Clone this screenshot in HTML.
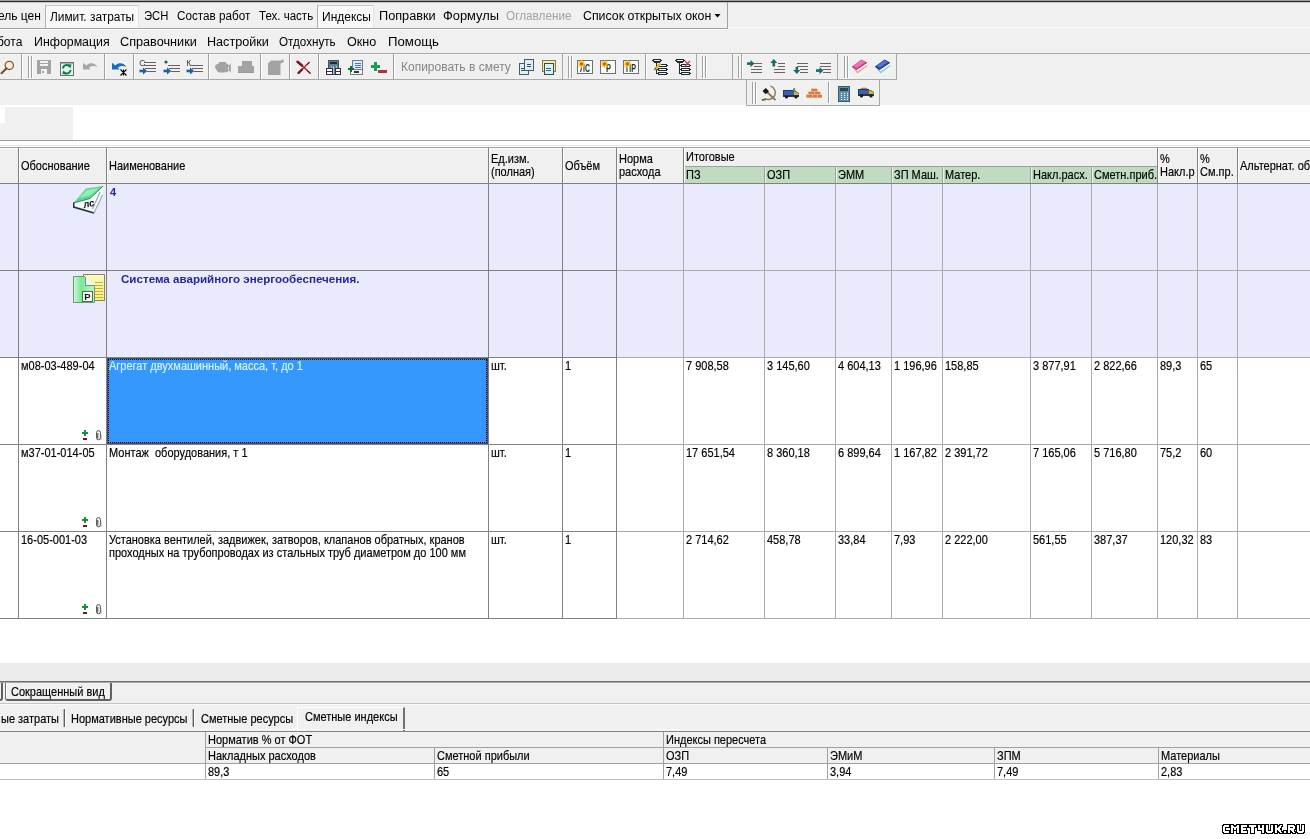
<!DOCTYPE html>
<html><head><meta charset="utf-8">
<style>
*{margin:0;padding:0;box-sizing:border-box}
html,body{width:1310px;height:839px;overflow:hidden;background:#fff;font-family:"Liberation Sans",sans-serif;position:relative}
.a{position:absolute}
#root{position:absolute;left:0;top:0;width:1310px;height:839px;will-change:transform}
.t{position:absolute;white-space:nowrap;font-size:12px;line-height:14px;color:#000}
.g{position:absolute;white-space:nowrap;font-size:11px;line-height:13px;color:#000;-webkit-text-stroke:0.15px currentColor;transform:scaleY(1.12);transform-origin:0 0}
.b{position:absolute;white-space:nowrap;font-size:11px;line-height:13px;color:#2626a0;font-weight:bold}
svg{shape-rendering:crispEdges}
svg .s{shape-rendering:geometricPrecision}
</style></head><body><div id="root">
<div class="a" style="left:0px;top:0px;width:1310px;height:106px;background:#f0f0f0;"></div>
<div class="a" style="left:0px;top:0px;width:1310px;height:1px;background:#a0a0a0"></div>
<div class="a" style="left:0px;top:1px;width:1310px;height:1px;background:#2a2a2a"></div>
<div class="a" style="left:0px;top:2px;width:1310px;height:1px;background:#c8c8c8"></div>
<div class="a" style="left:0px;top:28px;width:728px;height:1px;background:#a0a0a0"></div>
<div class="a" style="left:0px;top:29px;width:728px;height:1px;background:#fcfcfc"></div>
<div class="a" style="left:727px;top:2px;width:1px;height:27px;background:#a0a0a0"></div>
<div class="a" style="left:728px;top:27px;width:582px;height:1px;background:#fafafa"></div>
<div class="a" style="left:45px;top:5px;width:94px;height:23px;background:#f9f9f9;border-left:1px solid #b0b0b0;border-top:1px solid #c8c8c8;border-right:1px solid #e2e2e2"></div>
<div class="a" style="left:317px;top:5px;width:57px;height:23px;background:#f9f9f9;border-left:1px solid #b0b0b0;border-top:1px solid #c8c8c8;border-right:1px solid #e2e2e2"></div>
<div class="t" style="left:-2px;top:9px;transform:scaleX(1);transform-origin:0 0">ель цен</div>
<div class="t" style="left:50px;top:10px;transform:scaleX(0.99);transform-origin:0 0">Лимит. затраты</div>
<div class="t" style="left:144px;top:9px;transform:scaleX(0.94);transform-origin:0 0">ЭСН</div>
<div class="t" style="left:177px;top:9px;transform:scaleX(0.975);transform-origin:0 0">Состав работ</div>
<div class="t" style="left:259px;top:9px;transform:scaleX(0.96);transform-origin:0 0">Тех. часть</div>
<div class="t" style="left:322px;top:10px;transform:scaleX(1.0);transform-origin:0 0">Индексы</div>
<div class="t" style="left:379px;top:9px;transform:scaleX(1.06);transform-origin:0 0">Поправки</div>
<div class="t" style="left:443px;top:9px;transform:scaleX(1.07);transform-origin:0 0">Формулы</div>
<div class="t" style="left:506px;top:9px;color:#a3a3a3;transform:scaleX(0.98);transform-origin:0 0">Оглавление</div>
<div class="t" style="left:583px;top:9px;transform:scaleX(1.03);transform-origin:0 0">Список открытых окон</div>
<svg class="a" style="left:714px;top:14px" width="7" height="4" viewBox="0 0 7 4"><path class="s" d="M0.5 0H6.5L3.5 3.5Z" fill="#000"/></svg>
<div class="t" style="left:-3px;top:35px;transform:scaleX(1);transform-origin:0 0">бота</div>
<div class="t" style="left:34px;top:35px;transform:scaleX(1.03);transform-origin:0 0">Информация</div>
<div class="t" style="left:120px;top:35px;transform:scaleX(1.056);transform-origin:0 0">Справочники</div>
<div class="t" style="left:207px;top:35px;transform:scaleX(1.05);transform-origin:0 0">Настройки</div>
<div class="t" style="left:279px;top:35px;transform:scaleX(0.97);transform-origin:0 0">Отдохнуть</div>
<div class="t" style="left:347px;top:35px;transform:scaleX(1.05);transform-origin:0 0">Окно</div>
<div class="t" style="left:388px;top:35px;transform:scaleX(1.1);transform-origin:0 0">Помощь</div>
<div class="a" style="left:0px;top:53px;width:1310px;height:1px;background:#a8a8a8"></div>
<div class="a" style="left:0px;top:79px;width:897px;height:1px;background:#a8a8a8"></div>
<div class="a" style="left:0px;top:54px;width:897px;height:1px;background:#f8f8f8"></div>
<div class="a" style="left:21px;top:54px;width:1px;height:25px;background:#a0a0a0"></div>
<div class="a" style="left:22px;top:54px;width:1px;height:25px;background:#ffffff"></div>
<div class="a" style="left:28px;top:56px;width:1px;height:22px;background:#a0a0a0"></div>
<div class="a" style="left:29px;top:56px;width:1px;height:22px;background:#fff"></div>
<div class="a" style="left:31px;top:56px;width:1px;height:22px;background:#a0a0a0"></div>
<div class="a" style="left:32px;top:56px;width:1px;height:22px;background:#fff"></div>
<div class="a" style="left:104px;top:54px;width:1px;height:25px;background:#a0a0a0"></div>
<div class="a" style="left:105px;top:54px;width:1px;height:25px;background:#ffffff"></div>
<div class="a" style="left:133px;top:54px;width:1px;height:25px;background:#a0a0a0"></div>
<div class="a" style="left:134px;top:54px;width:1px;height:25px;background:#ffffff"></div>
<div class="a" style="left:208px;top:54px;width:1px;height:25px;background:#a0a0a0"></div>
<div class="a" style="left:209px;top:54px;width:1px;height:25px;background:#ffffff"></div>
<div class="a" style="left:260px;top:54px;width:1px;height:25px;background:#a0a0a0"></div>
<div class="a" style="left:261px;top:54px;width:1px;height:25px;background:#ffffff"></div>
<div class="a" style="left:289px;top:54px;width:1px;height:25px;background:#a0a0a0"></div>
<div class="a" style="left:290px;top:54px;width:1px;height:25px;background:#ffffff"></div>
<div class="a" style="left:318px;top:54px;width:1px;height:25px;background:#a0a0a0"></div>
<div class="a" style="left:319px;top:54px;width:1px;height:25px;background:#ffffff"></div>
<div class="a" style="left:393px;top:54px;width:1px;height:25px;background:#a0a0a0"></div>
<div class="a" style="left:394px;top:54px;width:1px;height:25px;background:#ffffff"></div>
<div class="a" style="left:562px;top:53px;width:1px;height:27px;background:#a8a8a8"></div>
<div class="a" style="left:568px;top:56px;width:1px;height:22px;background:#a0a0a0"></div>
<div class="a" style="left:569px;top:56px;width:1px;height:22px;background:#fff"></div>
<div class="a" style="left:571px;top:56px;width:1px;height:22px;background:#a0a0a0"></div>
<div class="a" style="left:572px;top:56px;width:1px;height:22px;background:#fff"></div>
<div class="a" style="left:645px;top:54px;width:1px;height:25px;background:#a0a0a0"></div>
<div class="a" style="left:646px;top:54px;width:1px;height:25px;background:#ffffff"></div>
<div class="a" style="left:696px;top:53px;width:1px;height:27px;background:#a8a8a8"></div>
<div class="a" style="left:702px;top:56px;width:1px;height:22px;background:#a0a0a0"></div>
<div class="a" style="left:703px;top:56px;width:1px;height:22px;background:#fff"></div>
<div class="a" style="left:705px;top:56px;width:1px;height:22px;background:#a0a0a0"></div>
<div class="a" style="left:706px;top:56px;width:1px;height:22px;background:#fff"></div>
<div class="a" style="left:732px;top:53px;width:1px;height:27px;background:#a8a8a8"></div>
<div class="a" style="left:738px;top:56px;width:1px;height:22px;background:#a0a0a0"></div>
<div class="a" style="left:739px;top:56px;width:1px;height:22px;background:#fff"></div>
<div class="a" style="left:741px;top:56px;width:1px;height:22px;background:#a0a0a0"></div>
<div class="a" style="left:742px;top:56px;width:1px;height:22px;background:#fff"></div>
<div class="a" style="left:741px;top:53px;width:1px;height:27px;background:#a8a8a8"></div>
<div class="a" style="left:837px;top:53px;width:1px;height:27px;background:#a8a8a8"></div>
<div class="a" style="left:844px;top:56px;width:1px;height:22px;background:#a0a0a0"></div>
<div class="a" style="left:845px;top:56px;width:1px;height:22px;background:#fff"></div>
<div class="a" style="left:847px;top:56px;width:1px;height:22px;background:#a0a0a0"></div>
<div class="a" style="left:848px;top:56px;width:1px;height:22px;background:#fff"></div>
<div class="a" style="left:896px;top:53px;width:1px;height:27px;background:#a8a8a8"></div>
<svg class="a" style="left:0px;top:57px" width="16" height="18" viewBox="0 0 16 18"><circle class="s" cx="9.3" cy="8.4" r="7" fill="#fdf0e2" opacity="0.6"/><circle class="s" cx="9.3" cy="8.4" r="4.1" fill="#fdeee0" stroke="#7a5a38" stroke-width="1.3"/><path class="s" d="M6.6 11.2L1.5 16.3" stroke="#6e5030" stroke-width="2" stroke-linecap="round"/></svg>
<svg class="a" style="left:37px;top:60px" width="15" height="14" viewBox="0 0 15 14"><path d="M0 0H14V14H0Z" fill="#a3a3a3"/><rect x="3" y="1" width="8" height="2" fill="#f2f2f2"/><rect x="3" y="4" width="8" height="2" fill="#f2f2f2"/><rect x="4" y="9" width="6" height="5" fill="#f2f2f2"/><rect x="5" y="11" width="2" height="2" fill="#a3a3a3"/></svg>
<svg class="a" style="left:60px;top:60px" width="15" height="16" viewBox="0 0 15 16"><rect x="0.5" y="2.5" width="13" height="13" fill="#dcf6ee" stroke="#707070"/><path d="M1 3H13" stroke="#b0b0b0"/><path class="s" d="M3 8.5A3.7 3.7 0 0 1 9.5 6.3M10.5 10A3.7 3.7 0 0 1 4 12.2" fill="none" stroke="#137a4a" stroke-width="1.9"/><path class="s" d="M7.6 4.2L11.6 4.6L10.3 8.4Z M6.2 14.4L2.2 14L3.5 10.2Z" fill="#137a4a"/></svg>
<svg class="a" style="left:83px;top:61px" width="16" height="16" viewBox="0 0 16 16"><path class="s" d="M0 1.7L0 8.6L7.7 8.6L5.9 6.7C8.2 4.6 11.6 4.3 14.4 6.2C12.4 2.2 7.2 0.8 3.3 4.4Z" fill="#a6a6a6" /></svg>
<svg class="a" style="left:112px;top:61px" width="16" height="16" viewBox="0 0 16 16"><path class="s" d="M0 1.7L0 8.6L7.7 8.6L5.9 6.7C8.2 4.6 11.6 4.3 14.4 6.2C12.4 2.2 7.2 0.8 3.3 4.4Z" fill="#1a6cc6" /><path class="s" d="M8.5 8.5L14.5 14.5M14.5 8.5L8.5 14.5M11.5 8.5V14.5" stroke="#000" stroke-width="1.1"/></svg>
<svg class="a" style="left:139px;top:57px" width="17" height="18" viewBox="0 0 17 18"><text x="0.2" y="9.2" font-size="8.5" font-family="Liberation Sans" fill="#3a3a3a">C</text><rect x="5" y="5" width="12" height="1" fill="#6a5e5e"/><rect x="5" y="8" width="12" height="1" fill="#6a5e5e"/><rect x="6" y="11" width="11" height="1" fill="#6a5e5e"/><rect x="8" y="14" width="9" height="1" fill="#6a5e5e"/><path class="s" d="M0.5 14H5.5" stroke="#1d5f9f" stroke-width="2.6"/><path class="s" d="M4 10.5L8.2 14L4 17.5Z" fill="#1d5f9f"/></svg>
<svg class="a" style="left:163px;top:57px" width="17" height="18" viewBox="0 0 17 18"><circle class="s" cx="3" cy="5" r="1.6" fill="#16662e"/><rect x="5" y="8" width="12" height="1" fill="#6a5e5e"/><rect x="6" y="11" width="11" height="1" fill="#6a5e5e"/><rect x="8" y="14" width="9" height="1" fill="#6a5e5e"/><path class="s" d="M0.5 14H5.5" stroke="#1d5f9f" stroke-width="2.6"/><path class="s" d="M4 10.5L8.2 14L4 17.5Z" fill="#1d5f9f"/></svg>
<svg class="a" style="left:186px;top:57px" width="17" height="18" viewBox="0 0 17 18"><text x="0.2" y="9.2" font-size="8.5" font-family="Liberation Sans" fill="#3a3a3a">К</text><rect x="5" y="8" width="12" height="1" fill="#6a5e5e"/><rect x="6" y="11" width="11" height="1" fill="#6a5e5e"/><rect x="8" y="14" width="9" height="1" fill="#6a5e5e"/><path class="s" d="M0.5 14H5.5" stroke="#1d5f9f" stroke-width="2.6"/><path class="s" d="M4 10.5L8.2 14L4 17.5Z" fill="#1d5f9f"/></svg>
<svg class="a" style="left:215px;top:57px" width="16" height="16" viewBox="0 0 16 16"><path class="s" d="M0 9C1 7.5 2.5 6.5 4 6.5V5H11V6.5C12.5 6.5 13.5 7.5 13.8 8.5L15.8 6.5V15.5L13.8 13.5C13 14.5 12 15.5 9 15.5H4C2 15 1 12 0 10Z" fill="#a3a3a3" /><path d="M13.3 9.5V13" stroke="#f0f0f0" stroke-width="0.8"/></svg>
<svg class="a" style="left:238px;top:60px" width="16" height="14" viewBox="0 0 16 14"><path d="M4 1H14V6H15.5V13H0V6H4Z" fill="#a3a3a3"/><path d="M0 13H16V12H0Z" fill="#9a9a9a"/></svg>
<svg class="a" style="left:268px;top:59px" width="16" height="16" viewBox="0 0 16 16"><path class="s" d="M0 4.5L3 1.5H13L15 0L16 3L12.5 4.5V16H0Z" fill="#a3a3a3" /></svg>
<svg class="a" style="left:296px;top:60px" width="16" height="16" viewBox="0 0 16 16"><path class="s" d="M2 2L14.5 13.5" stroke="#c8202c" stroke-width="1.6"/><path class="s" d="M13.5 2L2.5 13" stroke="#c8202c" stroke-width="1.4"/><path class="s" d="M1.5 1.8L6 5.5" stroke="#7a1420" stroke-width="2.4" stroke-linecap="round"/><path class="s" d="M2.5 13L6 9.5" stroke="#7a1420" stroke-width="2.4" stroke-linecap="round"/><path class="s" d="M11 10.5L14.5 13.5M11 5L13.5 2" stroke="#4a1a20" stroke-width="1"/></svg>
<svg class="a" style="left:326px;top:60px" width="15" height="15" viewBox="0 0 15 15"><rect x="2.5" y="0.5" width="10" height="14" fill="#5f7f94" stroke="#3f5564"/><rect x="4" y="2" width="7" height="2" fill="#1e2e38"/><path d="M5 5.5V14M7.5 5.5V14M10 5.5V14" stroke="#a8cce0" stroke-width="1"/><path d="M0.5 8.5H6V11.5H0.5Z M0.5 11.5H6V14.5H0.5Z M9 8.5H14.5V11.5H9Z M9 11.5H14.5V14.5H9Z" fill="#fafafa" stroke="#333"/></svg>
<svg class="a" style="left:348px;top:60px" width="15" height="15" viewBox="0 0 15 15"><rect x="4.5" y="0.5" width="10" height="9" fill="#dcecfa" stroke="#6c7c88"/><path d="M7 3H13M7 5H13M7 7H13" stroke="#4b7aa8" stroke-width="1"/><rect x="2.5" y="9.5" width="12" height="5" fill="#f4f4f4" stroke="#7a7a7a"/><rect x="6" y="11" width="5" height="2" fill="#333"/><path d="M3 6V12M0 9H6" stroke="#0e6e36" stroke-width="2.2"/></svg>
<svg class="a" style="left:371px;top:61px" width="16" height="12" viewBox="0 0 16 12"><path d="M4.5 1V10M0 5.5H9" stroke="#14a050" stroke-width="3"/><rect x="7" y="8.5" width="9" height="3" fill="#b8303a"/></svg>
<div class="t" style="left:401px;top:60px;color:#858585">Копировать в смету</div>
<svg class="a" style="left:519px;top:59px" width="15" height="16" viewBox="0 0 15 16"><rect x="5.5" y="0.5" width="9" height="11" fill="#d8eefa" stroke="#4a5a62" stroke-width="1.2"/><path d="M7.5 5H12M7.5 7H12" stroke="#3a4a58"/><rect x="0.5" y="4.5" width="9" height="11" fill="#d8f4f8" stroke="#4a5a62" stroke-width="1.2"/><path d="M2 9H5M2 11H5" stroke="#3a4a58"/><rect x="5.5" y="0.5" width="9" height="11" fill="#dcecfa" stroke="#4a5a62" stroke-width="1.2"/><path d="M7.5 5H12M7.5 7H12" stroke="#3a4a58"/></svg>
<svg class="a" style="left:542px;top:59px" width="14" height="16" viewBox="0 0 14 16"><rect x="0.5" y="1.5" width="13" height="11" rx="1.5" fill="#f6eab0" stroke="#8a7a40" stroke-width="1.2"/><rect x="2.5" y="4.5" width="9" height="11" fill="#d8f2f8" stroke="#3a4a50" stroke-width="1.2"/><path d="M4 9H9M4 11H9" stroke="#2f5f8f"/></svg>
<svg class="a" style="left:577px;top:60px" width="16" height="14" viewBox="0 0 16 14"><rect x="0.5" y="0.5" width="15" height="13" fill="#f8fafc" stroke="#6f6f6f"/><text x="3" y="12" font-size="10" font-weight="bold" font-family="Liberation Sans" fill="#1e2a34" textLength="10" lengthAdjust="spacingAndGlyphs">ЛС</text><path class="s" d="M4.5 -0.5L5.4 1.8L7.8 0.8L6.8 3.1L9 4L6.8 4.9L7.8 7.2L5.4 6.2L4.5 8.5L3.6 6.2L1.2 7.2L2.2 4.9L0 4L2.2 3.1L1.2 0.8L3.6 1.8Z" fill="#f8c020"/><circle class="s" cx="4.5" cy="4" r="1.4" fill="#b85a10"/></svg>
<svg class="a" style="left:600px;top:60px" width="16" height="14" viewBox="0 0 16 14"><rect x="0.5" y="0.5" width="15" height="13" fill="#f8fafc" stroke="#6f6f6f"/><text x="6" y="12" font-size="10" font-weight="bold" font-family="Liberation Sans" fill="#1e2a34" textLength="5" lengthAdjust="spacingAndGlyphs">Р</text><path class="s" d="M4.5 -0.5L5.4 1.8L7.8 0.8L6.8 3.1L9 4L6.8 4.9L7.8 7.2L5.4 6.2L4.5 8.5L3.6 6.2L1.2 7.2L2.2 4.9L0 4L2.2 3.1L1.2 0.8L3.6 1.8Z" fill="#f8c020"/><circle class="s" cx="4.5" cy="4" r="1.4" fill="#b85a10"/></svg>
<svg class="a" style="left:623px;top:60px" width="16" height="14" viewBox="0 0 16 14"><rect x="0.5" y="0.5" width="15" height="13" fill="#f8fafc" stroke="#6f6f6f"/><text x="3" y="12" font-size="10" font-weight="bold" font-family="Liberation Sans" fill="#1e2a34" textLength="10" lengthAdjust="spacingAndGlyphs">ПР</text><path class="s" d="M4.5 -0.5L5.4 1.8L7.8 0.8L6.8 3.1L9 4L6.8 4.9L7.8 7.2L5.4 6.2L4.5 8.5L3.6 6.2L1.2 7.2L2.2 4.9L0 4L2.2 3.1L1.2 0.8L3.6 1.8Z" fill="#f8c020"/><circle class="s" cx="4.5" cy="4" r="1.4" fill="#b85a10"/></svg>
<svg class="a" style="left:652px;top:59px" width="16" height="17" viewBox="0 0 16 17"><rect x="1" y="0.5" width="8" height="2.5" rx="1" fill="none" stroke="#1e2a30" stroke-width="1.3"/><path d="M4.5 3V14.5H6M4.5 6.5H6M4.5 10.5H6" fill="none" stroke="#1e2a30" stroke-width="1.2"/><rect x="6.5" y="5.5" width="8.5" height="2.3" rx="1" fill="#f8f8f8" stroke="#1e2a30" stroke-width="1.3"/><rect x="6.5" y="9.5" width="8.5" height="2.3" rx="1" fill="#f8f8f8" stroke="#1e2a30" stroke-width="1.3"/><rect x="6.5" y="13.5" width="8.5" height="2.3" rx="1" fill="#f8f8f8" stroke="#1e2a30" stroke-width="1.3"/><path class="s" d="M2.5 11L8.5 4.5" stroke="#e8b828" stroke-width="2.4"/><path class="s" d="M2.5 11L4 8.5" stroke="#604010" stroke-width="1"/></svg>
<svg class="a" style="left:675px;top:59px" width="16" height="17" viewBox="0 0 16 17"><rect x="1" y="0.5" width="8" height="2.5" rx="1" fill="none" stroke="#1e2a30" stroke-width="1.3"/><path d="M4.5 3V14.5H6M4.5 6.5H6M4.5 10.5H6" fill="none" stroke="#1e2a30" stroke-width="1.2"/><rect x="6.5" y="5.5" width="8.5" height="2.3" rx="1" fill="#f8f8f8" stroke="#1e2a30" stroke-width="1.3"/><rect x="6.5" y="9.5" width="8.5" height="2.3" rx="1" fill="#f8f8f8" stroke="#1e2a30" stroke-width="1.3"/><rect x="6.5" y="13.5" width="8.5" height="2.3" rx="1" fill="#f8f8f8" stroke="#1e2a30" stroke-width="1.3"/><path class="s" d="M10 2L15 7M15 2L10 7" stroke="#c83848" stroke-width="1.2"/></svg>
<svg class="a" style="left:747px;top:59px" width="16" height="16" viewBox="0 0 16 16"><rect x="7" y="4" width="8" height="1" fill="#6e6060"/><rect x="7" y="7" width="8" height="1" fill="#6e6060"/><rect x="4" y="10" width="11" height="1" fill="#6e6060"/><rect x="4" y="13" width="11" height="1" fill="#6e6060"/><path class="s" d="M0 4.6H4.5" stroke="#1d6868" stroke-width="2.6"/><path class="s" d="M3.5 1L7.5 4.6L3.5 8.2Z" fill="#1d6868"/></svg>
<svg class="a" style="left:770px;top:59px" width="16" height="16" viewBox="0 0 16 16"><rect x="8" y="4" width="7" height="1" fill="#6e6060"/><rect x="8" y="7" width="7" height="1" fill="#6e6060"/><rect x="4" y="10" width="11" height="1" fill="#6e6060"/><rect x="4" y="13" width="11" height="1" fill="#6e6060"/><path class="s" d="M3.8 7.5V3" stroke="#1d6868" stroke-width="2.6"/><path class="s" d="M0.2 4L3.8 0L7.4 4Z" fill="#1d6868"/></svg>
<svg class="a" style="left:793px;top:59px" width="16" height="16" viewBox="0 0 16 16"><rect x="4" y="4" width="11" height="1" fill="#6e6060"/><rect x="4" y="7" width="11" height="1" fill="#6e6060"/><rect x="7" y="10" width="8" height="1" fill="#6e6060"/><rect x="7" y="13" width="8" height="1" fill="#6e6060"/><path class="s" d="M3.8 8V11.5" stroke="#1d6868" stroke-width="2.6"/><path class="s" d="M0.2 11L3.8 15L7.4 11Z" fill="#1d6868"/></svg>
<svg class="a" style="left:816px;top:59px" width="16" height="16" viewBox="0 0 16 16"><rect x="4" y="4" width="11" height="1" fill="#6e6060"/><rect x="4" y="7" width="11" height="1" fill="#6e6060"/><rect x="7" y="10" width="8" height="1" fill="#6e6060"/><rect x="7" y="13" width="8" height="1" fill="#6e6060"/><path class="s" d="M0 11.6H4.5" stroke="#1d6868" stroke-width="2.6"/><path class="s" d="M3.5 8L7.5 11.6L3.5 15.2Z" fill="#1d6868"/></svg>
<svg class="a" style="left:852px;top:59px" width="16" height="16" viewBox="0 0 16 16"><path class="s" d="M0.5 8.5L5.5 14.5L15.5 7L14.5 4.5Z" fill="#e8a4a0" /><path class="s" d="M4 10L5.5 12.5L15.5 5.5L15 3.5Z" fill="#fff0f6" /><path class="s" d="M0 7.5L9.5 0.5L15 3.5L4.5 10.5Z" fill="#e64a98" /><path class="s" d="M2 7L9.5 1.5L12.5 3.2L5 8.5Z" fill="rgba(255,255,255,0.25)" /><path class="s" d="M0.2 7.5L4.5 10.5L15 3.5" fill="none" stroke="#a02a60" stroke-width="0.9"/></svg>
<svg class="a" style="left:875px;top:59px" width="16" height="16" viewBox="0 0 16 16"><path class="s" d="M0.5 8.5L5.5 14.5L15.5 7L14.5 4.5Z" fill="#8ccce0" /><path class="s" d="M4 10L5.5 12.5L15.5 5.5L15 3.5Z" fill="#f0faff" /><path class="s" d="M0 7.5L9.5 0.5L15 3.5L4.5 10.5Z" fill="#2448b8" /><path class="s" d="M2 7L9.5 1.5L12.5 3.2L5 8.5Z" fill="rgba(255,255,255,0.25)" /><path class="s" d="M0.2 7.5L4.5 10.5L15 3.5" fill="none" stroke="#142a80" stroke-width="0.9"/></svg>
<div class="a" style="left:0px;top:105px;width:1310px;height:36px;background:#ffffff;"></div>
<div class="a" style="left:0px;top:107px;width:73px;height:33px;background:#f0f0f0;"></div>
<div class="a" style="left:0px;top:105px;width:5px;height:18px;background:#ffffff;"></div>
<div class="a" style="left:746px;top:80px;width:134px;height:26px;border:1px solid #a8a8a8;border-top:none;background:#f0f0f0"></div>
<div class="a" style="left:752px;top:82px;width:1px;height:22px;background:#a0a0a0"></div>
<div class="a" style="left:753px;top:82px;width:1px;height:22px;background:#fff"></div>
<div class="a" style="left:755px;top:82px;width:1px;height:22px;background:#a0a0a0"></div>
<div class="a" style="left:756px;top:82px;width:1px;height:22px;background:#fff"></div>
<div class="a" style="left:828px;top:82px;width:1px;height:21px;background:#a0a0a0"></div>
<div class="a" style="left:829px;top:82px;width:1px;height:21px;background:#ffffff"></div>
<svg class="a" style="left:761px;top:85px" width="16" height="16" viewBox="0 0 16 16"><path class="s" d="M9.5 1.2A6.6 6.6 0 1 1 5.5 14.2" fill="none" stroke="#8a7458" stroke-width="1.4"/><path class="s" d="M5.5 14L0.8 15.2" stroke="#7a6448" stroke-width="2"/><path class="s" d="M5.5 6.5L14.5 15.2" stroke="#8a7050" stroke-width="1.8"/><path class="s" d="M1.5 6L4.8 3L8 6.2L4.6 9.2Z" fill="#161616"/></svg>
<svg class="a" style="left:783px;top:88px" width="16" height="11" viewBox="0 0 16 11"><rect x="0.5" y="2.5" width="10" height="4.5" fill="#2f64b0" stroke="#1a3a70"/><path class="s" d="M10.5 3.5H13L16 5.5V8.5H10.5Z" fill="#c8b070" stroke="#6a5a30" stroke-width="0.8"/><rect x="0" y="7" width="16" height="1.5" fill="#333"/><circle class="s" cx="3.5" cy="9" r="1.6" fill="#1a1a1a"/><circle class="s" cx="13" cy="9" r="1.6" fill="#1a1a1a"/><path class="s" d="M10 0.5L12 0L12.5 3H10Z" fill="#5a8a60" /></svg>
<svg class="a" style="left:806px;top:88px" width="16" height="10" viewBox="0 0 16 10"><path d="M5 0.5H11V3.5H5Z M2 3.5H8V6.5H2Z M8 3.5H14V6.5H8Z M0 6.5H6V9.5H0Z M6 6.5H11V9.5H6Z M11 6.5H16V9.5H11Z" fill="#d27a48" stroke="#f0b088" stroke-width="0.7"/></svg>
<svg class="a" style="left:838px;top:86px" width="12" height="16" viewBox="0 0 12 16"><rect x="0.5" y="0.5" width="11" height="15" rx="1" fill="#5e90a8" stroke="#3a5a6a"/><rect x="2" y="2" width="8" height="3" fill="#2a4450"/><path d="M2.5 7.5H3.5M5.5 7.5H6.5M8.5 7.5H9.5M2.5 9.5H3.5M5.5 9.5H6.5M8.5 9.5H9.5M2.5 11.5H3.5M5.5 11.5H6.5M8.5 11.5H9.5M2.5 13.5H3.5M5.5 13.5H6.5M8.5 13.5H9.5" stroke="#f0faff"/></svg>
<svg class="a" style="left:858px;top:87px" width="16" height="11" viewBox="0 0 16 11"><path class="s" d="M1 3.5L3 1L6 0.5L9 1L10.5 3.5Z" fill="#e07020" /><rect x="0.5" y="2.5" width="10" height="4.5" fill="#2f64b0" stroke="#1a3a70"/><path class="s" d="M10.5 3.5H13L16 5.5V8.5H10.5Z" fill="#c8b070" stroke="#6a5a30" stroke-width="0.8"/><rect x="0" y="7" width="16" height="1.5" fill="#333"/><circle class="s" cx="3.5" cy="9" r="1.6" fill="#1a1a1a"/><circle class="s" cx="13" cy="9" r="1.6" fill="#1a1a1a"/></svg>
<div class="a" style="left:0px;top:140px;width:1310px;height:1px;background:#a0a0a0"></div>
<div class="a" style="left:0px;top:145px;width:1310px;height:1px;background:#e6e6e6"></div>
<div class="a" style="left:0px;top:148px;width:1310px;height:35px;background:#f0f0f0;"></div>
<div class="a" style="left:0px;top:147px;width:1310px;height:1px;background:#a0a0a0"></div>
<div class="a" style="left:0px;top:148px;width:1310px;height:1px;background:#fafafa"></div>
<div class="a" style="left:684px;top:167px;width:473px;height:16px;background:#c0dcc0;"></div>
<div class="a" style="left:684px;top:166px;width:473px;height:1px;background:#a0a0a0"></div>
<div class="a" style="left:18px;top:148px;width:1px;height:35px;background:#808080"></div>
<div class="a" style="left:19px;top:148px;width:1px;height:35px;background:#ffffff"></div>
<div class="a" style="left:106px;top:148px;width:1px;height:35px;background:#808080"></div>
<div class="a" style="left:107px;top:148px;width:1px;height:35px;background:#ffffff"></div>
<div class="a" style="left:488px;top:148px;width:1px;height:35px;background:#808080"></div>
<div class="a" style="left:489px;top:148px;width:1px;height:35px;background:#ffffff"></div>
<div class="a" style="left:562px;top:148px;width:1px;height:35px;background:#808080"></div>
<div class="a" style="left:563px;top:148px;width:1px;height:35px;background:#ffffff"></div>
<div class="a" style="left:616px;top:148px;width:1px;height:35px;background:#808080"></div>
<div class="a" style="left:617px;top:148px;width:1px;height:35px;background:#ffffff"></div>
<div class="a" style="left:683px;top:148px;width:1px;height:35px;background:#808080"></div>
<div class="a" style="left:684px;top:148px;width:1px;height:35px;background:#ffffff"></div>
<div class="a" style="left:764px;top:167px;width:1px;height:16px;background:#a0a0a0"></div>
<div class="a" style="left:765px;top:167px;width:1px;height:16px;background:#e8f2e8"></div>
<div class="a" style="left:835px;top:167px;width:1px;height:16px;background:#a0a0a0"></div>
<div class="a" style="left:836px;top:167px;width:1px;height:16px;background:#e8f2e8"></div>
<div class="a" style="left:891px;top:167px;width:1px;height:16px;background:#a0a0a0"></div>
<div class="a" style="left:892px;top:167px;width:1px;height:16px;background:#e8f2e8"></div>
<div class="a" style="left:942px;top:167px;width:1px;height:16px;background:#a0a0a0"></div>
<div class="a" style="left:943px;top:167px;width:1px;height:16px;background:#e8f2e8"></div>
<div class="a" style="left:1030px;top:167px;width:1px;height:16px;background:#a0a0a0"></div>
<div class="a" style="left:1031px;top:167px;width:1px;height:16px;background:#e8f2e8"></div>
<div class="a" style="left:1091px;top:167px;width:1px;height:16px;background:#a0a0a0"></div>
<div class="a" style="left:1092px;top:167px;width:1px;height:16px;background:#e8f2e8"></div>
<div class="a" style="left:1157px;top:148px;width:1px;height:35px;background:#808080"></div>
<div class="a" style="left:1158px;top:148px;width:1px;height:35px;background:#ffffff"></div>
<div class="a" style="left:1197px;top:148px;width:1px;height:35px;background:#808080"></div>
<div class="a" style="left:1198px;top:148px;width:1px;height:35px;background:#ffffff"></div>
<div class="a" style="left:1237px;top:148px;width:1px;height:35px;background:#808080"></div>
<div class="a" style="left:1238px;top:148px;width:1px;height:35px;background:#ffffff"></div>
<div class="a" style="left:0px;top:183px;width:1310px;height:1px;background:#808080"></div>
<div class="g" style="left:21px;top:159px;">Обоснование</div>
<div class="g" style="left:109px;top:159px;">Наименование</div>
<div class="g" style="left:491px;top:152px;">Ед.изм.</div>
<div class="g" style="left:491px;top:165px;">(полная)</div>
<div class="g" style="left:565px;top:159px;">Объём</div>
<div class="g" style="left:619px;top:152px;">Норма</div>
<div class="g" style="left:619px;top:165px;">расхода</div>
<div class="g" style="left:686px;top:150px;">Итоговые</div>
<div class="g" style="left:686px;top:168px;">ПЗ</div>
<div class="g" style="left:767px;top:168px;">ОЗП</div>
<div class="g" style="left:838px;top:168px;">ЭММ</div>
<div class="g" style="left:894px;top:168px;">ЗП Маш.</div>
<div class="g" style="left:945px;top:168px;">Матер.</div>
<div class="g" style="left:1033px;top:168px;">Накл.расх.</div>
<div class="g" style="left:1094px;top:168px;">Сметн.приб.</div>
<div class="g" style="left:1160px;top:152px;">%</div>
<div class="g" style="left:1160px;top:165px;">Накл.р</div>
<div class="g" style="left:1200px;top:152px;">%</div>
<div class="g" style="left:1200px;top:165px;">См.пр.</div>
<div class="g" style="left:1240px;top:159px;">Альтернат. об</div>
<div class="a" style="left:0px;top:184px;width:1310px;height:86px;background:#eaeafd;"></div>
<div class="a" style="left:0px;top:271px;width:1310px;height:86px;background:#eaeafd;"></div>
<div class="a" style="left:0px;top:270px;width:617px;height:1px;background:#808080"></div>
<div class="a" style="left:617px;top:270px;width:693px;height:1px;background:#acacac"></div>
<div class="a" style="left:0px;top:357px;width:617px;height:1px;background:#808080"></div>
<div class="a" style="left:617px;top:357px;width:693px;height:1px;background:#acacac"></div>
<div class="a" style="left:0px;top:444px;width:617px;height:1px;background:#808080"></div>
<div class="a" style="left:617px;top:444px;width:693px;height:1px;background:#acacac"></div>
<div class="a" style="left:0px;top:531px;width:617px;height:1px;background:#808080"></div>
<div class="a" style="left:617px;top:531px;width:693px;height:1px;background:#acacac"></div>
<div class="a" style="left:0px;top:618px;width:617px;height:1px;background:#808080"></div>
<div class="a" style="left:617px;top:618px;width:693px;height:1px;background:#acacac"></div>
<div class="a" style="left:18px;top:184px;width:1px;height:434px;background:#808080"></div>
<div class="a" style="left:106px;top:184px;width:1px;height:434px;background:#808080"></div>
<div class="a" style="left:488px;top:184px;width:1px;height:434px;background:#808080"></div>
<div class="a" style="left:562px;top:184px;width:1px;height:434px;background:#808080"></div>
<div class="a" style="left:616px;top:184px;width:1px;height:434px;background:#808080"></div>
<div class="a" style="left:683px;top:184px;width:1px;height:434px;background:#acacac"></div>
<div class="a" style="left:764px;top:184px;width:1px;height:434px;background:#acacac"></div>
<div class="a" style="left:835px;top:184px;width:1px;height:434px;background:#acacac"></div>
<div class="a" style="left:891px;top:184px;width:1px;height:434px;background:#acacac"></div>
<div class="a" style="left:942px;top:184px;width:1px;height:434px;background:#acacac"></div>
<div class="a" style="left:1030px;top:184px;width:1px;height:434px;background:#acacac"></div>
<div class="a" style="left:1091px;top:184px;width:1px;height:434px;background:#acacac"></div>
<div class="a" style="left:1157px;top:184px;width:1px;height:434px;background:#acacac"></div>
<div class="a" style="left:1197px;top:184px;width:1px;height:434px;background:#acacac"></div>
<div class="a" style="left:1237px;top:184px;width:1px;height:434px;background:#acacac"></div>
<div class="a" style="left:107px;top:358px;width:381px;height:86px;background:#3598fe;border:1px solid #3a5070;outline:1px dotted #000;outline-offset:-2px"></div>
<svg class="a" style="left:73px;top:186px" width="31" height="28" viewBox="0 0 31 28"><path class="s" d="M0.5 17L13 2.5L30 0L17 12.5Z" fill="#62d690"/><path class="s" d="M6 12L14 4L26 2L18 9Z" fill="#8ef0b4"/><path class="s" d="M0.5 17L17 12.5L30 0V9L21 27L0.5 21Z" fill="#f6fafc"/><path class="s" d="M0.5 17L17 12.5L30 0" fill="none" stroke="#2f8a50" stroke-width="1"/><path class="s" d="M0.7 16.5V21L21 27" fill="none" stroke="#223038" stroke-width="1.6"/><path class="s" d="M29.5 9L21 27M27 6L19.5 23" stroke="#9aaabb" stroke-width="1.2"/><text x="10" y="21" font-size="10" font-family="Liberation Sans" font-style="italic" font-weight="bold" transform="rotate(-14 16 18)" fill="#111">лс</text></svg>
<div class="b" style="left:110px;top:186px;">4</div>
<svg class="a" style="left:73px;top:274px" width="32" height="30" viewBox="0 0 32 30"><defs><linearGradient id="gd" x1="0" x2="1" y1="0" y2="0"><stop offset="0" stop-color="#d8f6dc"/><stop offset="0.35" stop-color="#78e896"/><stop offset="1" stop-color="#c8f0cc"/></linearGradient><linearGradient id="yd" x1="0" x2="0" y1="0" y2="1"><stop offset="0" stop-color="#fdf8c0"/><stop offset="1" stop-color="#f6f070"/></linearGradient></defs><rect x="10.5" y="0.5" width="21" height="26" fill="url(#yd)" stroke="#8a8a50"/><path d="M22 8H30M22 11H30M22 14H30M22 17H30M22 20H30M22 23H30" stroke="#c0b040"/><path class="s" d="M0.5 2.5H11.5L21.5 12.5V28.5H0.5Z" fill="url(#gd)" stroke="#6a9a70"/><path d="M12.5 2.5V11.5H21.5" fill="#eefaf0" stroke="#6a9a70"/><rect x="9.5" y="17.5" width="10" height="10" fill="#fff" stroke="#3a7a40"/><text x="11.2" y="26" font-size="9.5" font-weight="bold" font-family="Liberation Sans" fill="#111">P</text></svg>
<div class="b" style="left:121px;top:272px;font-size:11.6px">Система аварийного энергообеспечения.</div>
<div class="g" style="left:21px;top:359px;">м08-03-489-04</div>
<div class="g" style="left:109px;top:359px;color:#d4f4ff">Агрегат двухмашинный, масса, т, до 1</div>
<div class="g" style="left:491px;top:359px;">шт.</div>
<div class="g" style="left:565px;top:359px;">1</div>
<div class="g" style="left:686px;top:359px;">7 908,58</div>
<div class="g" style="left:767px;top:359px;">3 145,60</div>
<div class="g" style="left:838px;top:359px;">4 604,13</div>
<div class="g" style="left:894px;top:359px;">1 196,96</div>
<div class="g" style="left:945px;top:359px;">158,85</div>
<div class="g" style="left:1033px;top:359px;">3 877,91</div>
<div class="g" style="left:1094px;top:359px;">2 822,66</div>
<div class="g" style="left:1160px;top:359px;">89,3</div>
<div class="g" style="left:1200px;top:359px;">65</div>
<svg class="a" style="left:82px;top:430px" width="6" height="10" viewBox="0 0 6 10"><path d="M3 0V6M0 3H6" stroke="#1f8a3a" stroke-width="2"/><rect x="1" y="8" width="4" height="2" fill="#701818"/></svg>
<svg class="a" style="left:96px;top:430px" width="6" height="11" viewBox="0 0 6 11"><rect class="s" x="0.6" y="0.6" width="3.8" height="9.2" rx="1.9" fill="#fff" stroke="#4a4a4a" stroke-width="1"/><path class="s" d="M1.8 3V8.5" stroke="#3a3a2a" stroke-width="1"/><path class="s" d="M4.9 4.5V9.5" stroke="#7a7a7a" stroke-width="0.9"/></svg>
<div class="g" style="left:21px;top:446px;">м37-01-014-05</div>
<div class="g" style="left:109px;top:446px;">Монтаж&nbsp; оборудования, т 1</div>
<div class="g" style="left:491px;top:446px;">шт.</div>
<div class="g" style="left:565px;top:446px;">1</div>
<div class="g" style="left:686px;top:446px;">17 651,54</div>
<div class="g" style="left:767px;top:446px;">8 360,18</div>
<div class="g" style="left:838px;top:446px;">6 899,64</div>
<div class="g" style="left:894px;top:446px;">1 167,82</div>
<div class="g" style="left:945px;top:446px;">2 391,72</div>
<div class="g" style="left:1033px;top:446px;">7 165,06</div>
<div class="g" style="left:1094px;top:446px;">5 716,80</div>
<div class="g" style="left:1160px;top:446px;">75,2</div>
<div class="g" style="left:1200px;top:446px;">60</div>
<svg class="a" style="left:82px;top:517px" width="6" height="10" viewBox="0 0 6 10"><path d="M3 0V6M0 3H6" stroke="#1f8a3a" stroke-width="2"/><rect x="1" y="8" width="4" height="2" fill="#701818"/></svg>
<svg class="a" style="left:96px;top:517px" width="6" height="11" viewBox="0 0 6 11"><rect class="s" x="0.6" y="0.6" width="3.8" height="9.2" rx="1.9" fill="#fff" stroke="#4a4a4a" stroke-width="1"/><path class="s" d="M1.8 3V8.5" stroke="#3a3a2a" stroke-width="1"/><path class="s" d="M4.9 4.5V9.5" stroke="#7a7a7a" stroke-width="0.9"/></svg>
<div class="g" style="left:21px;top:533px;">16-05-001-03</div>
<div class="g" style="left:109px;top:533px;">Установка вентилей, задвижек, затворов, клапанов обратных, кранов</div>
<div class="g" style="left:109px;top:546px;">проходных на трубопроводах из стальных труб диаметром до 100 мм</div>
<div class="g" style="left:491px;top:533px;">шт.</div>
<div class="g" style="left:565px;top:533px;">1</div>
<div class="g" style="left:686px;top:533px;">2 714,62</div>
<div class="g" style="left:767px;top:533px;">458,78</div>
<div class="g" style="left:838px;top:533px;">33,84</div>
<div class="g" style="left:894px;top:533px;">7,93</div>
<div class="g" style="left:945px;top:533px;">2 222,00</div>
<div class="g" style="left:1033px;top:533px;">561,55</div>
<div class="g" style="left:1094px;top:533px;">387,37</div>
<div class="g" style="left:1160px;top:533px;">120,32</div>
<div class="g" style="left:1200px;top:533px;">83</div>
<svg class="a" style="left:82px;top:604px" width="6" height="10" viewBox="0 0 6 10"><path d="M3 0V6M0 3H6" stroke="#1f8a3a" stroke-width="2"/><rect x="1" y="8" width="4" height="2" fill="#701818"/></svg>
<svg class="a" style="left:96px;top:604px" width="6" height="11" viewBox="0 0 6 11"><rect class="s" x="0.6" y="0.6" width="3.8" height="9.2" rx="1.9" fill="#fff" stroke="#4a4a4a" stroke-width="1"/><path class="s" d="M1.8 3V8.5" stroke="#3a3a2a" stroke-width="1"/><path class="s" d="M4.9 4.5V9.5" stroke="#7a7a7a" stroke-width="0.9"/></svg>
<div class="a" style="left:0px;top:663px;width:1310px;height:18px;background:#ebebeb;"></div>
<div class="a" style="left:0px;top:681px;width:1310px;height:50px;background:#f0f0f0;"></div>
<div class="a" style="left:0px;top:681px;width:1310px;height:1px;background:#6e6e6e"></div>
<div class="a" style="left:0px;top:682px;width:1310px;height:1px;background:#a8a8a8"></div>
<div class="a" style="left:5px;top:683px;width:107px;height:18px;border-left:1px solid #707070;border-right:2px solid #606060;border-bottom:2px solid #606060;border-radius:0 0 3px 3px;background:#f0f0f0;box-shadow:inset 1px 0 #fff"></div>
<div class="a" style="left:-3px;top:683px;width:6px;height:18px;border-right:2px solid #606060;border-bottom:2px solid #606060;border-radius:0 0 3px 3px"></div>
<div class="g" style="left:11px;top:685px;">Сокращенный вид</div>
<div class="a" style="left:0px;top:703px;width:1310px;height:1px;background:#c4c4c4"></div>
<div class="a" style="left:0px;top:704px;width:1310px;height:1px;background:#fafafa"></div>
<div class="g" style="left:1px;top:712px;">ые затраты</div>
<div class="a" style="left:63px;top:709px;width:1px;height:18px;background:#b8b8b8"></div>
<div class="a" style="left:64px;top:709px;width:1px;height:18px;background:#606060"></div>
<div class="a" style="left:65px;top:709px;width:1px;height:18px;background:#ffffff"></div>
<div class="g" style="left:71px;top:712px;">Нормативные ресурсы</div>
<div class="a" style="left:192px;top:709px;width:1px;height:18px;background:#b8b8b8"></div>
<div class="a" style="left:193px;top:709px;width:1px;height:18px;background:#606060"></div>
<div class="a" style="left:194px;top:709px;width:1px;height:18px;background:#ffffff"></div>
<div class="g" style="left:201px;top:712px;">Сметные ресурсы</div>
<div class="a" style="left:297px;top:707px;width:108px;height:24px;border-left:1px solid #ffffff;border-top:1px solid #ffffff;border-right:2px solid #707070;background:#f0f0f0"></div>
<div class="g" style="left:305px;top:710px;">Сметные индексы</div>
<div class="a" style="left:0px;top:729px;width:1310px;height:1px;background:#fafafa"></div>
<div class="a" style="left:0px;top:731px;width:1310px;height:1px;background:#858585"></div>
<div class="a" style="left:0px;top:732px;width:1310px;height:31px;background:#f0f0f0;"></div>
<div class="a" style="left:0px;top:764px;width:1310px;height:15px;background:#ffffff;"></div>
<div class="a" style="left:205px;top:747px;width:1105px;height:1px;background:#a0a0a0"></div>
<div class="a" style="left:0px;top:763px;width:1310px;height:1px;background:#a0a0a0"></div>
<div class="a" style="left:0px;top:779px;width:1310px;height:1px;background:#c0c0c0"></div>
<div class="a" style="left:205px;top:732px;width:1px;height:47px;background:#a0a0a0"></div>
<div class="a" style="left:663px;top:732px;width:1px;height:47px;background:#a0a0a0"></div>
<div class="a" style="left:434px;top:748px;width:1px;height:31px;background:#a0a0a0"></div>
<div class="a" style="left:827px;top:748px;width:1px;height:31px;background:#a0a0a0"></div>
<div class="a" style="left:994px;top:748px;width:1px;height:31px;background:#a0a0a0"></div>
<div class="a" style="left:1158px;top:748px;width:1px;height:31px;background:#a0a0a0"></div>
<div class="g" style="left:208px;top:733px;">Норматив % от ФОТ</div>
<div class="g" style="left:666px;top:733px;">Индексы пересчета</div>
<div class="g" style="left:208px;top:749px;">Накладных расходов</div>
<div class="g" style="left:437px;top:749px;">Сметной прибыли</div>
<div class="g" style="left:666px;top:749px;">ОЗП</div>
<div class="g" style="left:830px;top:749px;">ЭМиМ</div>
<div class="g" style="left:997px;top:749px;">ЗПМ</div>
<div class="g" style="left:1161px;top:749px;">Материалы</div>
<div class="g" style="left:208px;top:765px;">89,3</div>
<div class="g" style="left:437px;top:765px;">65</div>
<div class="g" style="left:666px;top:765px;">7,49</div>
<div class="g" style="left:830px;top:765px;">3,94</div>
<div class="g" style="left:997px;top:765px;">7,49</div>
<div class="g" style="left:1161px;top:765px;">2,83</div>
<svg class="a" style="left:1220px;top:822px" width="90" height="14" viewBox="0 0 90 14"><rect x="3" y="2" width="7" height="4" fill="#000"/><rect x="2" y="3" width="4" height="8" fill="#000"/><rect x="3" y="8" width="7" height="4" fill="#000"/><rect x="10" y="2" width="4" height="10" fill="#000"/><rect x="16" y="2" width="4" height="10" fill="#000"/><rect x="12" y="3" width="3" height="4" fill="#000"/><rect x="13" y="4" width="4" height="5" fill="#000"/><rect x="15" y="3" width="3" height="4" fill="#000"/><rect x="20" y="2" width="4" height="10" fill="#000"/><rect x="22" y="2" width="6" height="4" fill="#000"/><rect x="22" y="5" width="5" height="4" fill="#000"/><rect x="22" y="8" width="6" height="4" fill="#000"/><rect x="28" y="2" width="9" height="4" fill="#000"/><rect x="30" y="4" width="5" height="8" fill="#000"/><rect x="37" y="2" width="4" height="7" fill="#000"/><rect x="37" y="5" width="8" height="4" fill="#000"/><rect x="41" y="2" width="4" height="10" fill="#000"/><rect x="45" y="2" width="4" height="9" fill="#000"/><rect x="50" y="2" width="4" height="9" fill="#000"/><rect x="46" y="8" width="7" height="4" fill="#000"/><rect x="54" y="2" width="4" height="10" fill="#000"/><rect x="56" y="5" width="4" height="4" fill="#000"/><rect x="57" y="4" width="4" height="4" fill="#000"/><rect x="58" y="3" width="4" height="4" fill="#000"/><rect x="59" y="2" width="4" height="3" fill="#000"/><rect x="57" y="6" width="4" height="4" fill="#000"/><rect x="58" y="7" width="4" height="4" fill="#000"/><rect x="59" y="9" width="4" height="3" fill="#000"/><rect x="63" y="8" width="4" height="4" fill="#000"/><rect x="67" y="2" width="4" height="10" fill="#000"/><rect x="69" y="2" width="6" height="4" fill="#000"/><rect x="72" y="3" width="4" height="5" fill="#000"/><rect x="69" y="5" width="6" height="4" fill="#000"/><rect x="70" y="7" width="4" height="3" fill="#000"/><rect x="71" y="7" width="4" height="4" fill="#000"/><rect x="72" y="9" width="4" height="3" fill="#000"/><rect x="76" y="2" width="4" height="9" fill="#000"/><rect x="81" y="2" width="4" height="9" fill="#000"/><rect x="77" y="8" width="7" height="4" fill="#000"/><rect x="4" y="3" width="5" height="2" fill="#fff"/><rect x="3" y="4" width="2" height="6" fill="#fff"/><rect x="4" y="9" width="5" height="2" fill="#fff"/><rect x="11" y="3" width="2" height="8" fill="#fff"/><rect x="17" y="3" width="2" height="8" fill="#fff"/><rect x="13" y="4" width="1" height="2" fill="#fff"/><rect x="14" y="5" width="2" height="3" fill="#fff"/><rect x="16" y="4" width="1" height="2" fill="#fff"/><rect x="21" y="3" width="2" height="8" fill="#fff"/><rect x="23" y="3" width="4" height="2" fill="#fff"/><rect x="23" y="6" width="3" height="2" fill="#fff"/><rect x="23" y="9" width="4" height="2" fill="#fff"/><rect x="29" y="3" width="7" height="2" fill="#fff"/><rect x="31" y="5" width="3" height="6" fill="#fff"/><rect x="38" y="3" width="2" height="5" fill="#fff"/><rect x="38" y="6" width="6" height="2" fill="#fff"/><rect x="42" y="3" width="2" height="8" fill="#fff"/><rect x="46" y="3" width="2" height="7" fill="#fff"/><rect x="51" y="3" width="2" height="7" fill="#fff"/><rect x="47" y="9" width="5" height="2" fill="#fff"/><rect x="55" y="3" width="2" height="8" fill="#fff"/><rect x="57" y="6" width="2" height="2" fill="#fff"/><rect x="58" y="5" width="2" height="2" fill="#fff"/><rect x="59" y="4" width="2" height="2" fill="#fff"/><rect x="60" y="3" width="2" height="1" fill="#fff"/><rect x="58" y="7" width="2" height="2" fill="#fff"/><rect x="59" y="8" width="2" height="2" fill="#fff"/><rect x="60" y="10" width="2" height="1" fill="#fff"/><rect x="64" y="9" width="2" height="2" fill="#fff"/><rect x="68" y="3" width="2" height="8" fill="#fff"/><rect x="70" y="3" width="4" height="2" fill="#fff"/><rect x="73" y="4" width="2" height="3" fill="#fff"/><rect x="70" y="6" width="4" height="2" fill="#fff"/><rect x="71" y="8" width="2" height="1" fill="#fff"/><rect x="72" y="8" width="2" height="2" fill="#fff"/><rect x="73" y="10" width="2" height="1" fill="#fff"/><rect x="77" y="3" width="2" height="7" fill="#fff"/><rect x="82" y="3" width="2" height="7" fill="#fff"/><rect x="78" y="9" width="5" height="2" fill="#fff"/></svg>
</div></body></html>
